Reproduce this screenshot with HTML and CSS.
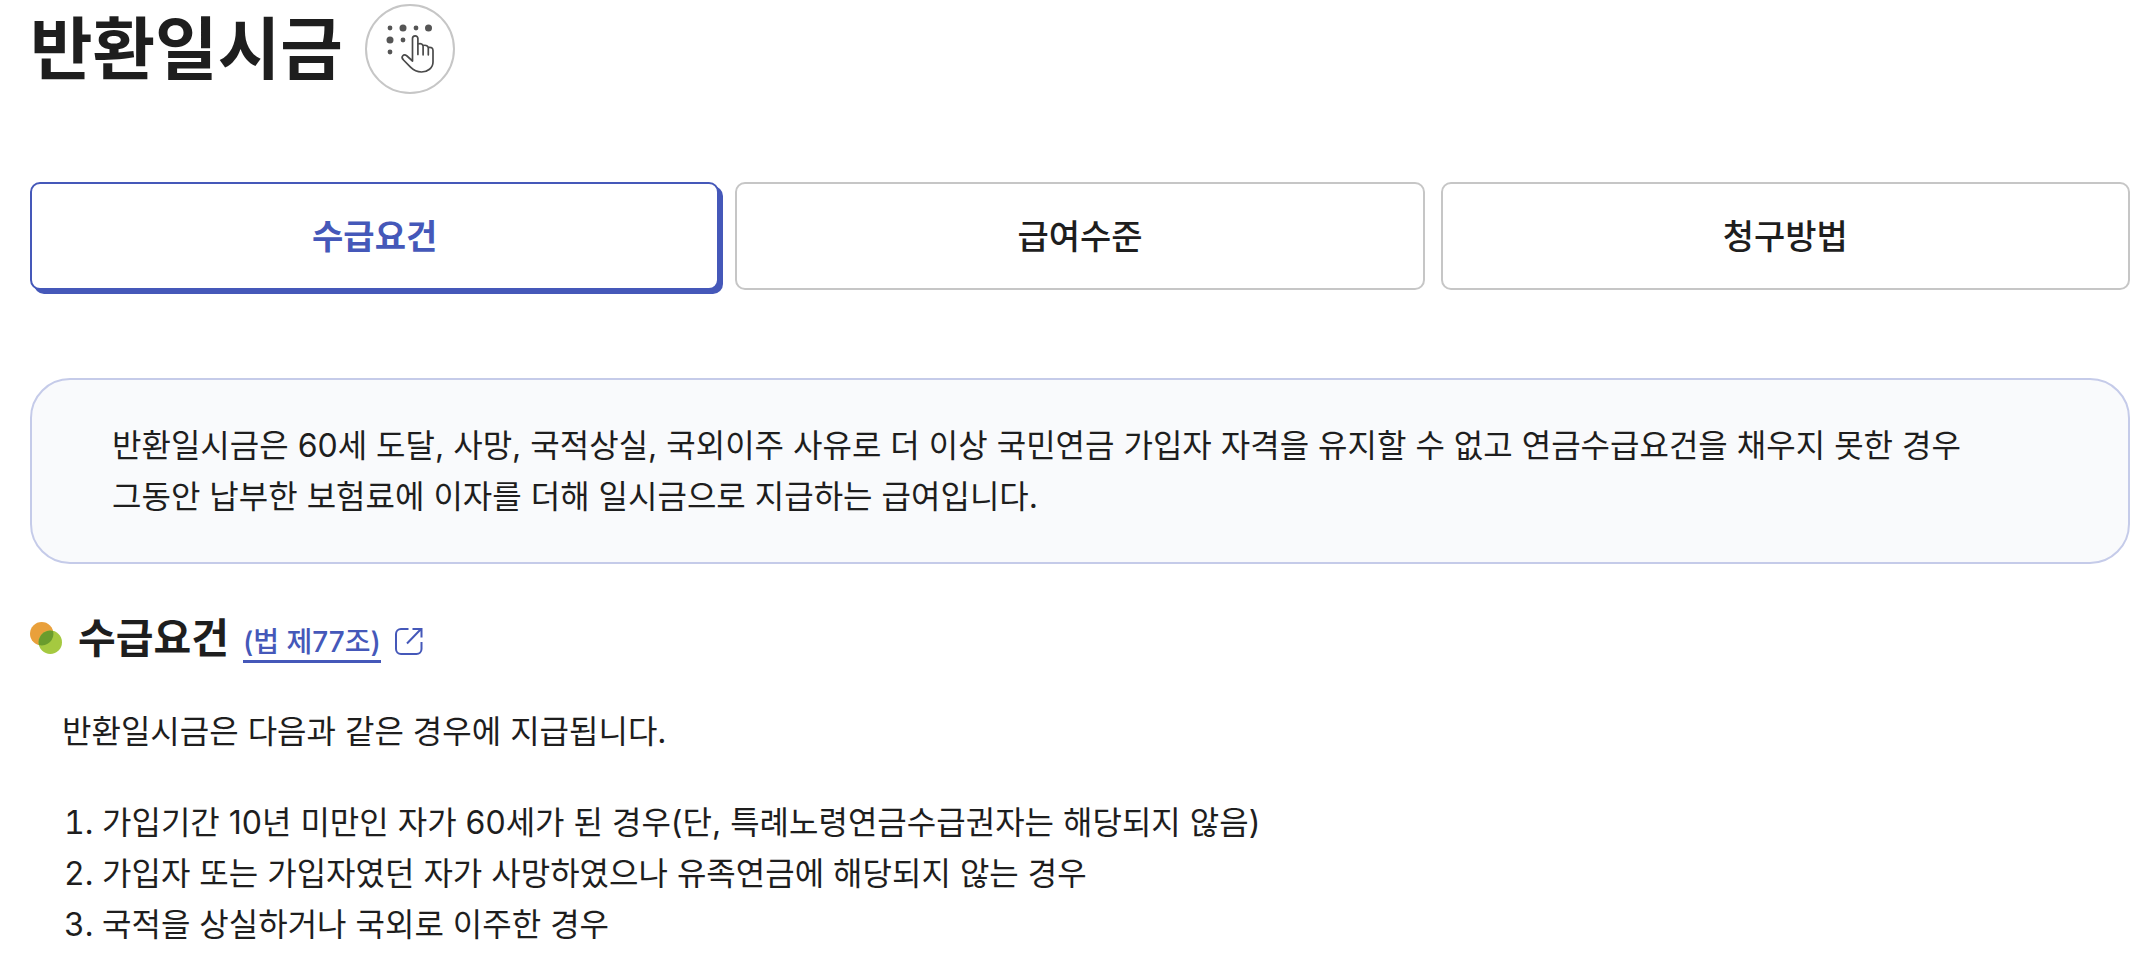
FILE: index.html
```html
<!DOCTYPE html>
<html lang="ko">
<head>
  <meta charset="UTF-8">
  <meta name="viewport" content="width=device-width, initial-scale=1.0">
  <title>반환일시금</title>
  <link rel="stylesheet" href="styles.css">
</head>
<body>
<header class="page-title">
  <h1>반환일시금</h1>
  <button type="button" class="braille-btn" aria-label="점자 보기">
    <svg width="90" height="90" viewBox="0 0 90 90" aria-hidden="true">
      <g fill="#555">
        <circle cx="25" cy="24" r="2.4"/>
        <circle cx="38" cy="24" r="3.5"/>
        <circle cx="51" cy="24" r="2.4"/>
        <circle cx="63.500" cy="24" r="3.5"/>
        <circle cx="25" cy="36" r="3.5"/>
        <circle cx="38" cy="36" r="2.4"/>
        <circle cx="25" cy="48" r="2.4"/>
      </g>
      <path d="M47.500 57V34.500a2.700 2.700 0 0 1 5.400 0V50.500M52.900 40c3-1 5.200 0 5.200 2.500v8.300M58.100 41.500c3-.8 5.200 .3 5.200 2.800v6.500M63.300 43.500c2.800-.6 4.700 .5 4.700 3V58c0 6-5.500 10-11.500 10-4.500 0-8-1.800-11-4.800l-7-7.200c-3.300-3.500 .2-6.500 3.500-4l5.500 5" fill="none" stroke="#4a4a4a" stroke-width="1.700" stroke-linecap="round" stroke-linejoin="round"/>
    </svg>
  </button>
</header>

<nav class="tabs">
  <button type="button" class="tab active" aria-current="true">수급요건</button>
  <button type="button" class="tab">급여수준</button>
  <button type="button" class="tab">청구방법</button>
</nav>

<main>
  <div class="summary-box">
    <p>반환일시금은 60세 도달, 사망, 국적상실, 국외이주 사유로 더 이상 국민연금 가입자 자격을 유지할 수 없고 연금수급요건을 채우지 못한 경우<br>그동안 납부한 보험료에 이자를 더해 일시금으로 지급하는 급여입니다.</p>
  </div>

  <div class="section-title">
    <svg class="bullet" width="32" height="32" viewBox="0 0 32 32" aria-hidden="true">
      <circle cx="11.700" cy="11.700" r="11.700" fill="#e9a03b"/>
      <circle cx="20.300" cy="20.300" r="11.700" fill="#a5c940"/>
      <path d="M23.100 8.900A11.700 11.700 0 0 1 8.900 23.100A11.700 11.700 0 0 1 23.100 8.900Z" fill="#6a9c2d"/>
    </svg>
    <h2>수급요건</h2>
    <a href="#" class="law-link">
      <span>(법 제77조)</span>
      <svg width="28" height="28" viewBox="0 0 28 28" fill="none" stroke="#4558b9" stroke-width="2" aria-hidden="true">
        <path d="M13.500 2H6a5 5 0 0 0-5 5V22a5 5 0 0 0 5 5H21.500a5 5 0 0 0 5-5V15M12 16.500L26 2M17.500 2H26.500V10.500"/>
      </svg>
    </a>
  </div>

  <div class="section-content">
    <p>반환일시금은 다음과 같은 경우에 지급됩니다.</p>
    <ol>
      <li>가입기간 10년 미만인 자가 60세가 된 경우(단, 특례노령연금수급권자는 해당되지 않음)</li>
      <li>가입자 또는 가입자였던 자가 사망하였으나 유족연금에 해당되지 않는 경우</li>
      <li>국적을 상실하거나 국외로 이주한 경우</li>
    </ol>
  </div>
</main>
</body>
</html>
```
FILE: styles.css
```css
* {
  box-sizing: border-box;
}
body {
  margin: 0;
  padding: 4px 20px 0 30px;
  background-color: #fff;
  color: #1e1e1e;
  font-family: Inter, "Noto Sans CJK KR", sans-serif;
  font-size: 32px;
  line-height: 51px;
}
h1, h2, p, ol {
  margin: 0;
}
button {
  padding: 0;
  font-family: inherit;
  color: inherit;
  cursor: pointer;
}
.page-title {
  display: flex;
  align-items: center;
  gap: 22px;
}
.page-title h1 {
  font-size: 68px;
  line-height: 90px;
  font-weight: 700;
}
.braille-btn {
  display: flex;
  align-items: center;
  justify-content: center;
  width: 90px;
  height: 90px;
  border: 2px solid #c6c6c6;
  border-radius: 50%;
  background-color: #fff;
}
.braille-btn svg {
  flex: none;
}
.tabs {
  display: grid;
  grid-template-columns: repeat(3, 1fr);
  gap: 16px;
  margin-top: 88px;
}
.tab {
  height: 108px;
  border: 2px solid #c6c6c6;
  border-radius: 10px;
  background-color: #fff;
  font-size: 34px;
  line-height: 51px;
  font-weight: 500;
}
.tab.active {
  border-color: #4558b9;
  box-shadow: 4px 4px 0 #4558b9;
  color: #4558b9;
  font-weight: 700;
}
.summary-box {
  margin-top: 88px;
  padding: 40px 80px;
  border: 2px solid #c5cbe9;
  border-radius: 40px;
  background-color: #f9fafc;
}
.section-title {
  display: flex;
  align-items: center;
  margin-top: 44px;
}
.section-title h2 {
  margin-left: 16px;
  font-size: 41px;
  line-height: 60px;
  font-weight: 700;
}
.law-link {
  display: flex;
  align-items: flex-end;
  gap: 14px;
  margin-left: 14px;
  color: #4558b9;
  font-size: 28px;
  line-height: 36px;
  font-weight: 500;
  text-decoration: none;
}
.law-link span {
  padding-top: 10px;
  border-bottom: 3px solid #4558b9;
}
.law-link svg {
  margin-bottom: 8px;
}
.section-content {
  margin-top: 38px;
  padding-left: 32px;
}
.section-content ol {
  margin-top: 40px;
  padding-left: 40px;
}
```
